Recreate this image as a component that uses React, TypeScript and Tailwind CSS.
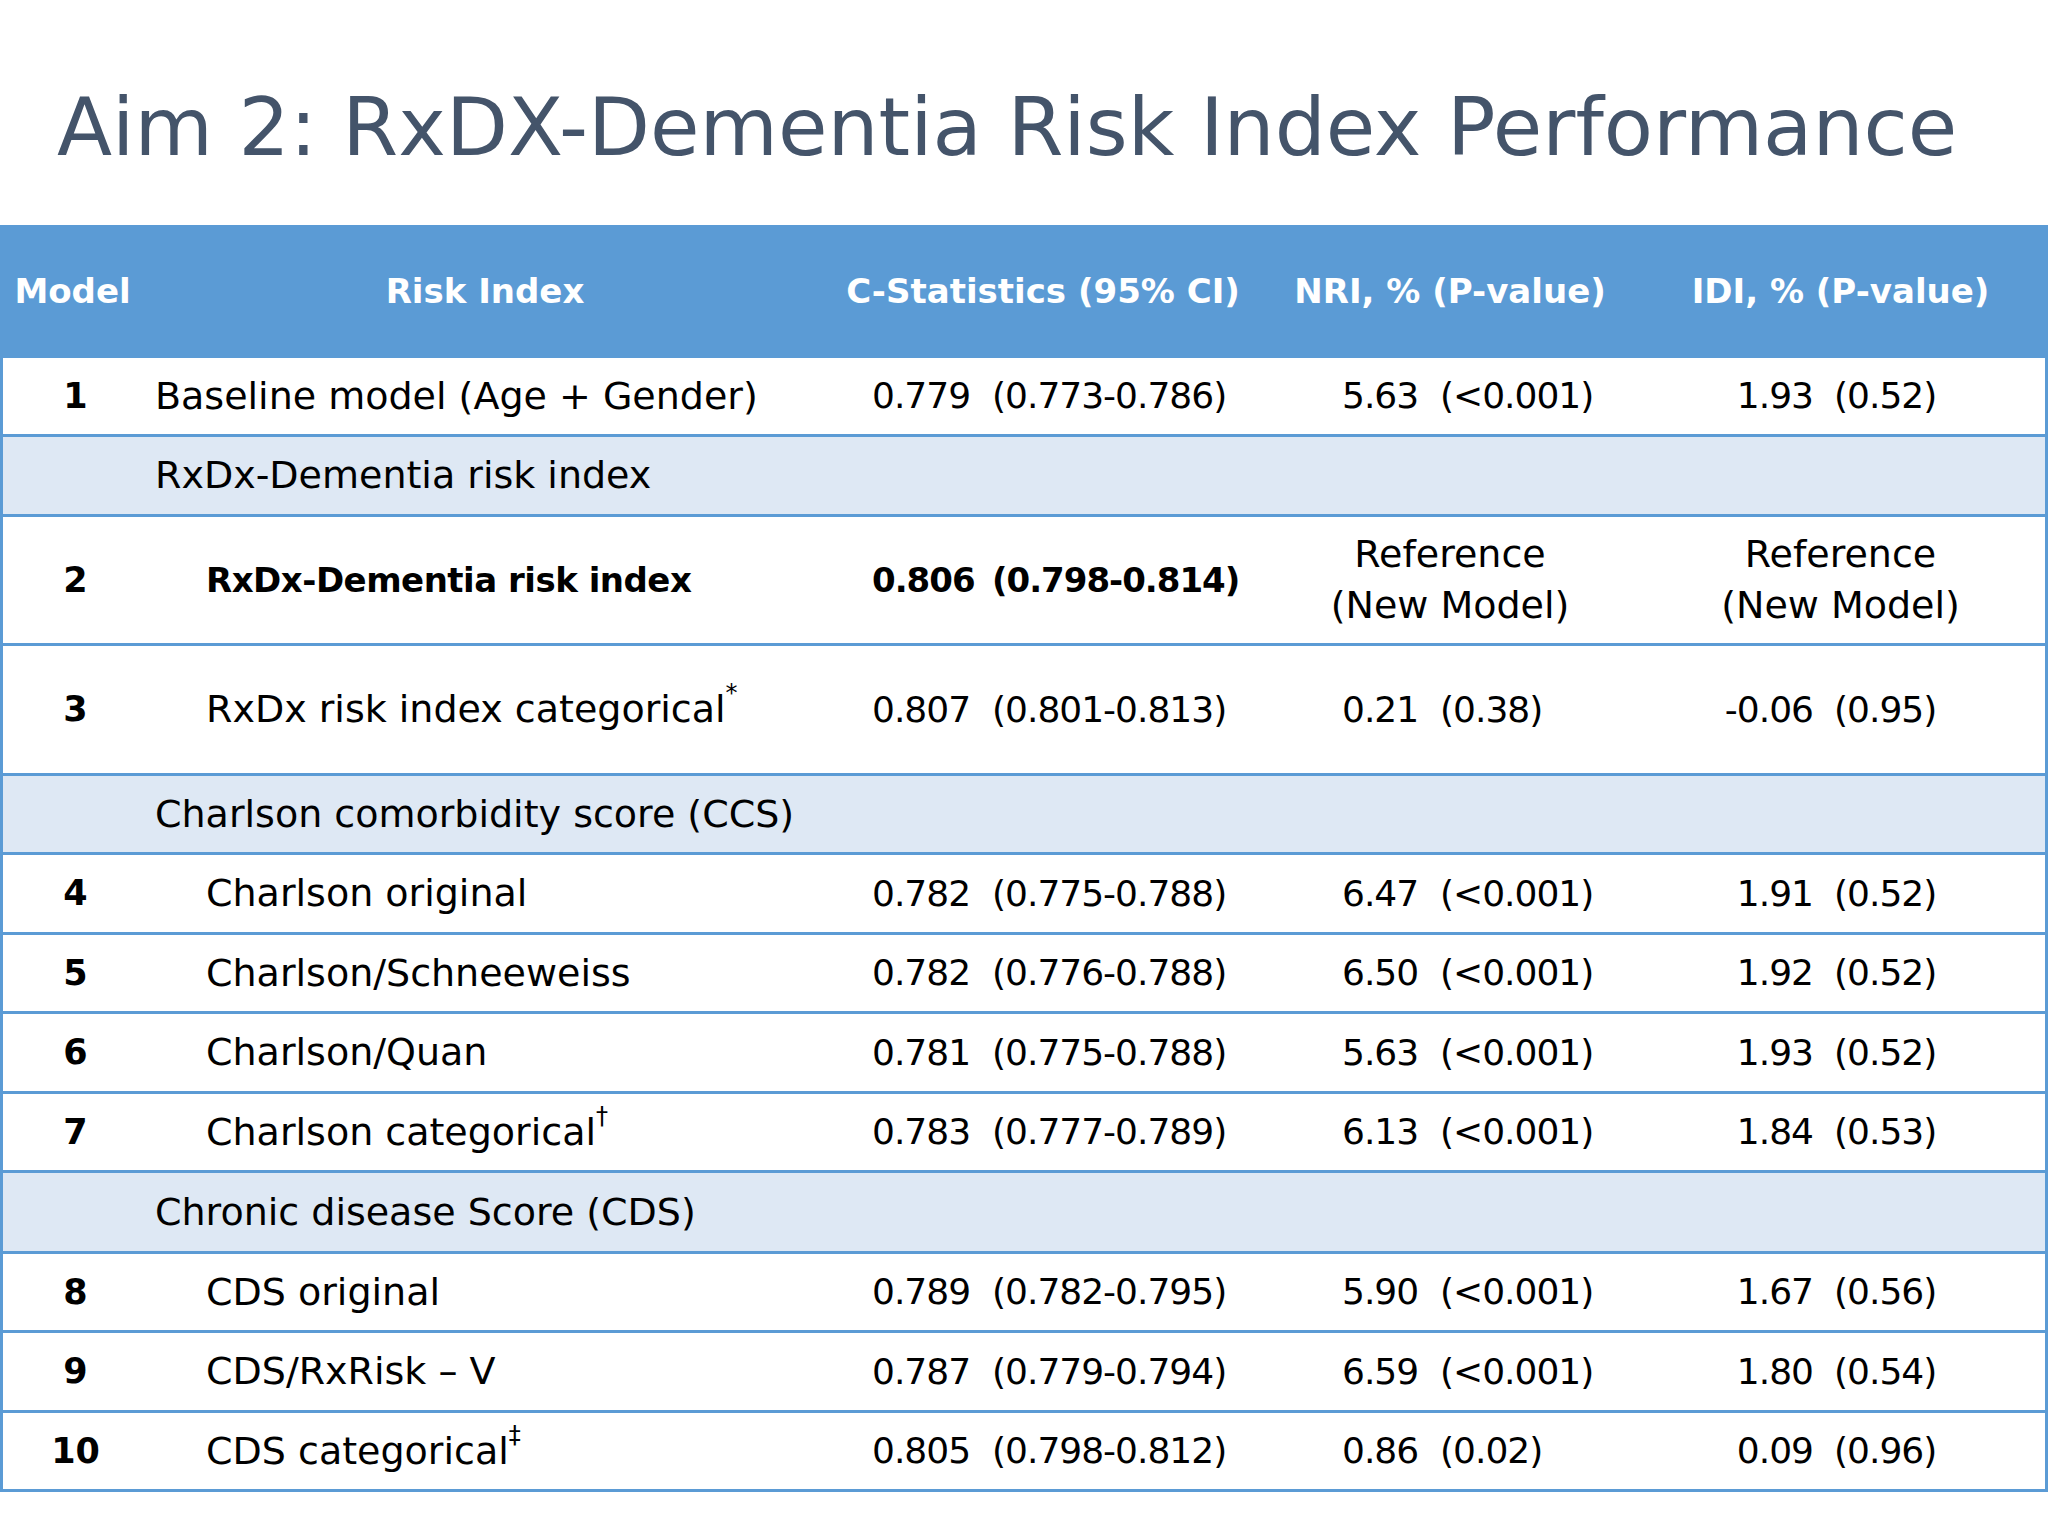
import React from "react";

type Row =
  | { kind: "section"; label: string; h: string }
  | {
      kind: "data";
      n: string;
      label: React.ReactNode;
      indent?: boolean;
      bold?: boolean;
      c: [string, string];
      nri: [string, string] | null;
      idi: [string, string] | null;
      h: string;
    };

const sup = (s: string) => (
  <sup className="text-[24px] leading-none align-[9px]">{s}</sup>
);

const rows: Row[] = [
  { kind: "data", n: "1", label: "Baseline model (Age + Gender)", c: ["0.779", "(0.773-0.786)"], nri: ["5.63", "(<0.001)"], idi: ["1.93", "(0.52)"], h: "h-[79px]" },
  { kind: "section", label: "RxDx-Dementia risk index", h: "h-[80px]" },
  { kind: "data", n: "2", label: "RxDx-Dementia risk index", indent: true, bold: true, c: ["0.806", "(0.798-0.814)"], nri: null, idi: null, h: "h-[129px]" },
  { kind: "data", n: "3", label: <>RxDx risk index categorical{sup("*")}</>, indent: true, c: ["0.807", "(0.801-0.813)"], nri: ["0.21", "(0.38)"], idi: ["-0.06", "(0.95)"], h: "h-[130px]" },
  { kind: "section", label: "Charlson comorbidity score (CCS)", h: "h-[79px]" },
  { kind: "data", n: "4", label: "Charlson original", indent: true, c: ["0.782", "(0.775-0.788)"], nri: ["6.47", "(<0.001)"], idi: ["1.91", "(0.52)"], h: "h-[80px]" },
  { kind: "data", n: "5", label: "Charlson/Schneeweiss", indent: true, c: ["0.782", "(0.776-0.788)"], nri: ["6.50", "(<0.001)"], idi: ["1.92", "(0.52)"], h: "h-[79px]" },
  { kind: "data", n: "6", label: "Charlson/Quan", indent: true, c: ["0.781", "(0.775-0.788)"], nri: ["5.63", "(<0.001)"], idi: ["1.93", "(0.52)"], h: "h-[80px]" },
  { kind: "data", n: "7", label: <>Charlson categorical{sup("†")}</>, indent: true, c: ["0.783", "(0.777-0.789)"], nri: ["6.13", "(<0.001)"], idi: ["1.84", "(0.53)"], h: "h-[79px]" },
  { kind: "section", label: "Chronic disease Score (CDS)", h: "h-[81px]" },
  { kind: "data", n: "8", label: "CDS original", indent: true, c: ["0.789", "(0.782-0.795)"], nri: ["5.90", "(<0.001)"], idi: ["1.67", "(0.56)"], h: "h-[79px]" },
  { kind: "data", n: "9", label: "CDS/RxRisk – V", indent: true, c: ["0.787", "(0.779-0.794)"], nri: ["6.59", "(<0.001)"], idi: ["1.80", "(0.54)"], h: "h-[80px]" },
  { kind: "data", n: "10", label: <>CDS categorical{sup("‡")}</>, indent: true, c: ["0.805", "(0.798-0.812)"], nri: ["0.86", "(0.02)"], idi: ["0.09", "(0.96)"], h: "h-[79px]" },
];

const grid = "grid grid-cols-[145px_674px_442px_372px_1fr]";

function RefCell() {
  return (
    <div className="flex flex-col items-center text-[38px] leading-[51px]">
      <span>Reference</span>
      <span>(New Model)</span>
    </div>
  );
}

export default function App() {
  return (
    <div className="w-[2048px] h-[1536px] bg-white text-black font-['DejaVu_Sans',sans-serif]">
      <h1 className="pl-[57px] pt-[87px] text-[80.5px] leading-[81px] font-normal text-[#44546a] whitespace-nowrap">
        Aim 2: RxDX-Dementia Risk Index Performance
      </h1>

      <div className="mt-[57px] border-x-[3px] border-[#5b9bd5]">
        {/* header */}
        <div className={`${grid} h-[133px] items-center bg-[#5b9bd5] text-white font-bold text-[34px] whitespace-nowrap`}>
          <div className="text-center pr-[6px]">Model</div>
          <div className="text-center">Risk Index</div>
          <div className="text-center">C-Statistics (95% CI)</div>
          <div className="text-center">NRI, % (P-value)</div>
          <div className="text-center">IDI, % (P-value)</div>
        </div>

        {rows.map((r, i) =>
          r.kind === "section" ? (
            <div key={i} className={`${grid} ${r.h} items-center bg-[#dee8f4] border-b-[3px] border-[#5b9bd5]`}>
              <div />
              <div className="col-span-4 pl-[7px] text-[38px] whitespace-nowrap">{r.label}</div>
            </div>
          ) : (
            <div key={i} className={`${grid} ${r.h} items-center bg-white border-b-[3px] border-[#5b9bd5] whitespace-nowrap`}>
              <div className="text-center font-bold text-[35px]">{r.n}</div>
              <div
                className={`${r.indent ? "pl-[58px]" : "pl-[7px]"} ${
                  r.bold ? "font-bold text-[34px] tracking-[-0.5px]" : "text-[38px]"
                }`}
              >
                {r.label}
              </div>
              <div className={`flex pl-[50px] ${r.bold ? "font-bold text-[34px] tracking-[-1px]" : "text-[36px] tracking-[-1px]"}`}>
                <span className="w-[120px]">{r.c[0]}</span>
                <span>{r.c[1]}</span>
              </div>
              {r.nri ? (
                <div className="flex pl-[78px] text-[36px] tracking-[-1px]">
                  <span className="w-[98px]">{r.nri[0]}</span>
                  <span>{r.nri[1]}</span>
                </div>
              ) : (
                <RefCell />
              )}
              {r.idi ? (
                <div className="flex pl-[63px] text-[36px] tracking-[-1px]">
                  <span className="w-[114px] text-right">{r.idi[0]}</span>
                  <span className="ml-[21px]">{r.idi[1]}</span>
                </div>
              ) : (
                <RefCell />
              )}
            </div>
          )
        )}
      </div>
    </div>
  );
}
